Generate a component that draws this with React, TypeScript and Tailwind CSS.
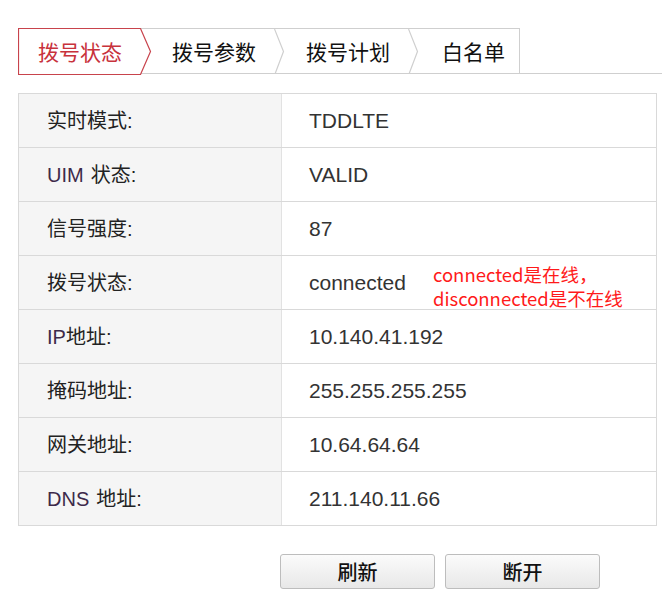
import React from "react";

const latin = "text-[#3d2a4a]";

const rows: { label: React.ReactNode; value: string }[] = [
  { label: "实时模式:", value: "TDDLTE" },
  { label: <><span className={latin}>UIM</span><span className="ml-[7px]">状态:</span></>, value: "VALID" },
  { label: "信号强度:", value: "87" },
  { label: "拨号状态:", value: "connected" },
  { label: <><span className={latin}>IP</span><span>地址:</span></>, value: "10.140.41.192" },
  { label: "掩码地址:", value: "255.255.255.255" },
  { label: "网关地址:", value: "10.64.64.64" },
  { label: <><span className={latin}>DNS</span><span className="ml-[7px]">地址:</span></>, value: "211.140.11.66" },
];

function Chevron({ left }: { left: number }) {
  return (
    <svg
      className="absolute top-0"
      style={{ left }}
      width="11"
      height="45"
      viewBox="0 0 11 45"
    >
      <polyline points="0.5,0 9.5,22.5 1,45" fill="none" stroke="#cfcfcf" strokeWidth="1.2" />
    </svg>
  );
}

export default function App() {
  const cjk = { fontFamily: '"Liberation Sans", "Noto Sans CJK SC", sans-serif' };
  const cjkOnly = { fontFamily: '"Noto Sans CJK SC", sans-serif' };
  return (
    <div className="w-[666px] h-[605px] bg-white pl-[18px] pt-[28px]" style={cjk}>
      {/* Tabs */}
      <div className="flex w-[644px] border-b border-[#cfcfcf]">
        <div className="flex h-[45px] border-t border-r border-[#cfcfcf]">
          <div className="relative w-[132px] h-[45px] flex items-center pl-[20px]">
            <svg className="absolute left-0 top-[-1px]" width="134" height="47" viewBox="0 0 134 47">
              <polygon
                points="0.5,0.5 122.5,0.5 132.5,23.5 122.5,46.5 0.5,46.5"
                fill="#ffffff"
                stroke="#c8434c"
                strokeWidth="1.2"
              />
            </svg>
            <span className="relative text-[21px] leading-none text-[#c8323c]" style={cjkOnly}>
              拨号状态
            </span>
          </div>
          <div className="relative w-[133px] h-[45px] flex items-center pl-[22px]">
            <span className="text-[21px] leading-none text-[#111]" style={cjkOnly}>
              拨号参数
            </span>
            <Chevron left={124} />
          </div>
          <div className="relative w-[135px] h-[45px] flex items-center pl-[23px]">
            <span className="text-[21px] leading-none text-[#111]" style={cjkOnly}>
              拨号计划
            </span>
            <Chevron left={125} />
          </div>
          <div className="relative w-[101px] h-[45px] flex items-center pl-[24px]">
            <span className="text-[21px] leading-none text-[#111]" style={cjkOnly}>
              白名单
            </span>
          </div>
        </div>
      </div>

      {/* Table */}
      <div className="mt-[19px] w-[639px] border border-[#d9d9d9]">
        {rows.map((r, i) => (
          <div
            key={i}
            className={`flex ${i < rows.length - 1 ? "h-[54px] border-b border-[#d9d9d9]" : "h-[53px]"}`}
          >
            <div className="w-[263px] shrink-0 bg-[#f5f5f5] border-r border-[#e2e2e2] flex items-center pl-[28px] text-[20px] text-[#222]">
              {r.label}
            </div>
            <div className="flex-1 flex items-center pl-[27px] text-[21px] text-[#333]">
              <span>{r.value}</span>
              {i === 3 && (
                <div
                  className="ml-[27px] pt-[6px] text-[18.5px] leading-[24px] text-[#ff1a1a]"
                  style={cjkOnly}
                >
                  <div>connected是在线，</div>
                  <div>disconnected是不在线</div>
                </div>
              )}
            </div>
          </div>
        ))}
      </div>

      {/* Buttons */}
      <div className="flex gap-[10px] ml-[262px] mt-[28px]">
        {["刷新", "断开"].map((t) => (
          <button
            key={t}
            className="w-[155px] h-[35px] rounded-[3px] border border-[#bdbdbd] bg-gradient-to-b from-[#fbfbfb] to-[#e8e8e8] text-[20px] font-medium text-[#111] flex items-center justify-center"
            style={cjkOnly}
          >
            {t}
          </button>
        ))}
      </div>
    </div>
  );
}
